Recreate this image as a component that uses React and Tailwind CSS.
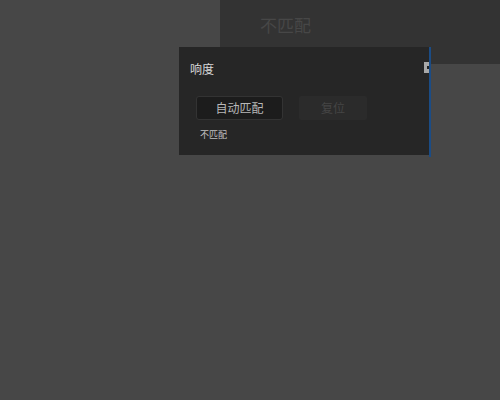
import React from 'react';

const font = { fontFamily: '"Noto Sans CJK SC", "Noto Sans", sans-serif' };

const LoudnessPopup = () => (
    <div className="absolute left-[179px] top-[47px] w-[252px] h-[110px] flex">
        <div className="flex-1 h-[108px] bg-[#262626] relative">
            <div className="pl-[11px] pt-[14px] text-[12px] leading-[16px] text-[#d8d8d8]">响度</div>
            <div className="flex gap-[16px] pl-[17px] mt-[19px]">
                <button className="w-[87px] h-[24px] rounded-[3px] bg-[#1c1c1c] border border-[#333] text-[12px] text-[#b8b8b8]">
                    自动匹配
                </button>
                <button className="w-[68px] h-[24px] rounded-[2px] bg-[#2b2b2b] text-[12px] text-[#454545]">
                    复位
                </button>
            </div>
            <div className="pl-[21px] mt-[9px] text-[9px] leading-[12px] text-[#c0c0c0]">不匹配</div>
            {/* little grip on the edge */}
            <div className="absolute right-0 top-[15px] w-[5px] h-[11px] bg-[#a8a8a8] flex items-center justify-end">
                <div className="w-[2px] h-[3px] bg-[#222]"></div>
            </div>
        </div>
        <div className="w-[2px] h-[110px] bg-[#1b4c85]"></div>
    </div>
);

export default function App() {
    return (
        <div className="w-[500px] h-[400px] bg-[#474747] relative overflow-hidden" style={font}>
            <div className="flex">
                <div className="w-[220px]"></div>
                <div className="flex-1 h-[64px] bg-[#333333] pl-[40px] pt-[13px]">
                    <span className="text-[17px] leading-[24px] text-[#474747]">不匹配</span>
                </div>
            </div>
            <LoudnessPopup />
        </div>
    );
}
